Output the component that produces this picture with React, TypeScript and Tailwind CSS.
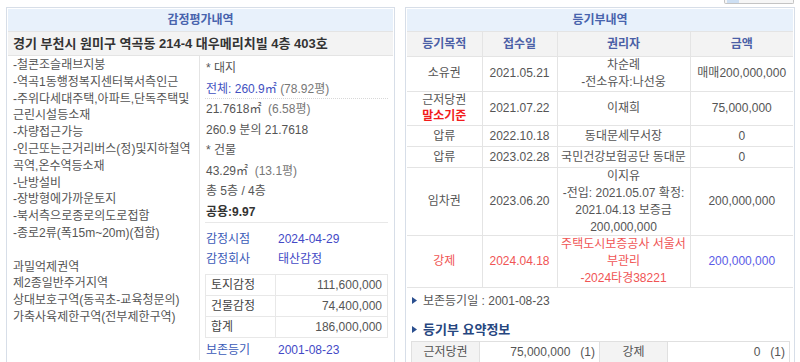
const leftLines = [
  "-철콘조슬래브지붕",
  "-역곡1동행정복지센터북서측인근",
  "-주위다세대주택,아파트,단독주택및",
  "근린시설등소재",
  "-차량접근가능",
  "-인근또는근거리버스(정)및지하철역",
  "곡역,온수역등소재",
  "-난방설비",
  "-장방형에가까운토지",
  "-북서측으로종로의도로접함",
  "-종로2류(폭15m~20m)(접함)",
  "",
  "과밀억제권역",
  "제2종일반주거지역",
  "상대보호구역(동곡초-교육청문의)",
  "가축사육제한구역(전부제한구역)",
];

const appraisal = [
  { label: "토지감정", value: "111,600,000" },
  { label: "건물감정", value: "74,400,000" },
  { label: "합계", value: "186,000,000" },
];

function Triangle() {
  return (
    <svg width="5" height="7" viewBox="0 0 5 7" className="mr-[6px] shrink-0">
      <path d="M0 0 L5 3.5 L0 7 Z" fill="#2b4f8f" />
    </svg>
  );
}

function LeftPanel() {
  return (
    <div className="w-[389px] border border-[#d7dee8] p-px">
      <div className="h-[22px] bg-[#e8f1fb] flex items-center justify-center text-[#4763ad] font-bold">
        감정평가내역
      </div>
      <div className="h-[25px] bg-[#f3f3f3] border-y border-[#e4e4e4] flex items-center pl-[5px] text-[13px] font-bold text-[#333] whitespace-nowrap">
        경기 부천시 원미구 역곡동 214-4 대우메리치빌 4층 403호
      </div>
      <div className="grid grid-cols-[192px_1fr]">
        <div className="border-r border-[#e4e4e4] pl-[5px] pt-px leading-[16.8px]">
          {leftLines.map((l, i) => (
            <div key={i} className="whitespace-nowrap h-[16.8px]">
              {l}
            </div>
          ))}
        </div>
        <div className="pl-[5px] pr-[5px] pt-[2px]">
          <div className="h-[20.5px] leading-[20.5px] pl-px">* 대지</div>
          <div className="h-[20.5px] leading-[20.5px] pl-px border-b border-dotted border-[#d8d8d8]">
            <span className="text-[#3f51bf]">전체: 260.9㎡</span> <span className="text-[#777]">(78.92평)</span>
          </div>
          <div className="h-[20.5px] leading-[20.5px] pl-px">21.7618㎡ &nbsp;<span className="text-[#777]">(6.58평)</span></div>
          <div className="h-[20.5px] leading-[20.5px] pl-px">260.9 분의 21.7618</div>
          <div className="h-[20.5px] leading-[20.5px] pl-px">* 건물</div>
          <div className="h-[20.5px] leading-[20.5px] pl-px">43.29㎡ &nbsp;<span className="text-[#777]">(13.1평)</span></div>
          <div className="h-[20.5px] leading-[20.5px] pl-px">총 5층 / 4층</div>
          <div className="h-[20.5px] leading-[20.5px] pl-px font-bold text-[#333]">공용:9.97</div>
          <div className="border-b border-[#e8e8e8]" />
          <div className="pt-[6px]">
            <div className="flex h-[20px] items-center pl-px">
              <span className="w-[72px] text-[#3b5bb8]">감정시점</span>
              <span className="text-[#4349c6]">2024-04-29</span>
            </div>
            <div className="flex h-[20px] items-center pl-px">
              <span className="w-[72px] text-[#3b5bb8]">감정회사</span>
              <span className="text-[#4349c6]">태산감정</span>
            </div>
          </div>
          <table className="mt-[5px] w-full border-collapse table-fixed">
            <colgroup>
              <col className="w-[70px]" />
              <col />
            </colgroup>
            <tbody>
              {appraisal.map((r) => (
                <tr key={r.label} className="h-[21px]">
                  <td className="border border-[#e8e8e8] pl-[5px] text-[#444]">{r.label}</td>
                  <td className="border border-[#e8e8e8] pr-[5px] text-right">{r.value}</td>
                </tr>
              ))}
            </tbody>
          </table>
          <div className="flex h-[20px] items-center pl-px mt-[2px]">
            <span className="w-[72px] text-[#3b5bb8]">보존등기</span>
            <span className="text-[#4349c6]">2001-08-23</span>
          </div>
        </div>
      </div>
    </div>
  );
}

type Row = {
  purpose: React.ReactNode;
  date: string;
  holder: React.ReactNode;
  amount: string;
  red?: boolean;
};

const rows: Row[] = [
  {
    purpose: "소유권",
    date: "2021.05.21",
    holder: (
      <>
        차순례
        <br />
        -전소유자:나선웅
      </>
    ),
    amount: "매매200,000,000",
  },
  {
    purpose: (
      <>
        근저당권
        <br />
        <span className="text-[#f21b1b] font-bold">말소기준</span>
      </>
    ),
    date: "2021.07.22",
    holder: "이재희",
    amount: "75,000,000",
  },
  { purpose: "압류", date: "2022.10.18", holder: "동대문세무서장", amount: "0" },
  { purpose: "압류", date: "2023.02.28", holder: "국민건강보험공단 동대문", amount: "0" },
  {
    purpose: "임차권",
    date: "2023.06.20",
    holder: (
      <>
        이지유
        <br />
        -전입: 2021.05.07 확정:
        <br />
        2021.04.13 보증금
        <br />
        200,000,000
      </>
    ),
    amount: "200,000,000",
  },
  {
    purpose: "강제",
    date: "2024.04.18",
    holder: (
      <>
        주택도시보증공사 서울서
        <br />
        부관리
        <br />
        -2024타경38221
      </>
    ),
    amount: "200,000,000",
    red: true,
  },
];

function RightPanel() {
  const th = "border border-[#e4e4e4] font-bold text-[#4b5fa6] text-center";
  const td = "border border-[#e4e4e4] text-center leading-[16.8px] whitespace-nowrap";
  const sumLabel = "border border-[#e0e0e0] bg-[#f3f3f3] text-center";
  const sumValue = "border border-[#e0e0e0] text-right pr-[4px]";
  return (
    <div className="w-[390px] border border-[#d7dee8] p-px">
      <div className="h-[22px] bg-[#e8f1fb] flex items-center justify-center text-[#4763ad] font-bold">
        등기부내역
      </div>
      <table className="w-full border-collapse table-fixed">
        <colgroup>
          <col className="w-[75px]" />
          <col className="w-[75px]" />
          <col className="w-[133px]" />
          <col />
        </colgroup>
        <thead>
          <tr className="h-[25px] bg-[#f3f3f3]">
            <th className={th + " border-l-0"}>등기목적</th>
            <th className={th}>접수일</th>
            <th className={th}>권리자</th>
            <th className={th + " border-r-0"}>금액</th>
          </tr>
        </thead>
        <tbody>
          {rows.map((r, i) => (
            <tr key={i} className="h-[21px]">
              <td className={td + " border-l-0" + (r.red ? " text-[#f05454]" : "")}>{r.purpose}</td>
              <td className={td + (r.red ? " text-[#f05454]" : "")}>{r.date}</td>
              <td className={td + (r.red ? " text-[#f05454]" : "")}>{r.holder}</td>
              <td className={td + " border-r-0" + (r.red ? " text-[#5a5ae6]" : "")}>{r.amount}</td>
            </tr>
          ))}
        </tbody>
      </table>
      <div className="flex items-center h-[18px] mt-[4px] pl-[5px]">
        <Triangle />
        <span>보존등기일 : 2001-08-23</span>
      </div>
      <div className="flex items-center h-[20px] mt-[10px] pl-[5px]">
        <Triangle />
        <span className="text-[13px] font-bold text-[#26467f]">등기부 요약정보</span>
      </div>
      <div className="pl-[4px] pr-[3px] mt-px">
        <table className="w-full border-collapse table-fixed">
          <colgroup>
            <col className="w-[68px]" />
            <col className="w-[120px]" />
            <col className="w-[68px]" />
            <col />
          </colgroup>
          <tbody>
            <tr className="h-[21px]">
              <td className={sumLabel}>근저당권</td>
              <td className={sumValue}>
                75,000,000<span className="ml-[10px]">(1)</span>
              </td>
              <td className={sumLabel}>강제</td>
              <td className={sumValue}>
                0<span className="ml-[10px]">(1)</span>
              </td>
            </tr>
            <tr className="h-[21px]">
              <td className={sumLabel} />
              <td className={sumValue} />
              <td className={sumLabel} />
              <td className={sumValue} />
            </tr>
          </tbody>
        </table>
      </div>
    </div>
  );
}

export default function App() {
  return (
    <div className="w-[800px] h-[362px] overflow-hidden bg-white text-[12px] text-[#555] font-['Liberation_Sans','Noto_Sans_CJK_KR',sans-serif]">
      <div className="h-[7px] flex justify-end pr-[6px]">
        <div className="w-[70px] h-[4px] border border-t-0 border-[#c4c4c4] rounded-b-[2px] bg-[#f6f6f6] flex">
          <div className="w-[12px] ml-[2px] h-[3px] bg-[#cddff3]" />
        </div>
      </div>
      <div className="flex gap-[10px] pl-[6px]">
        <LeftPanel />
        <RightPanel />
      </div>
    </div>
  );
}
